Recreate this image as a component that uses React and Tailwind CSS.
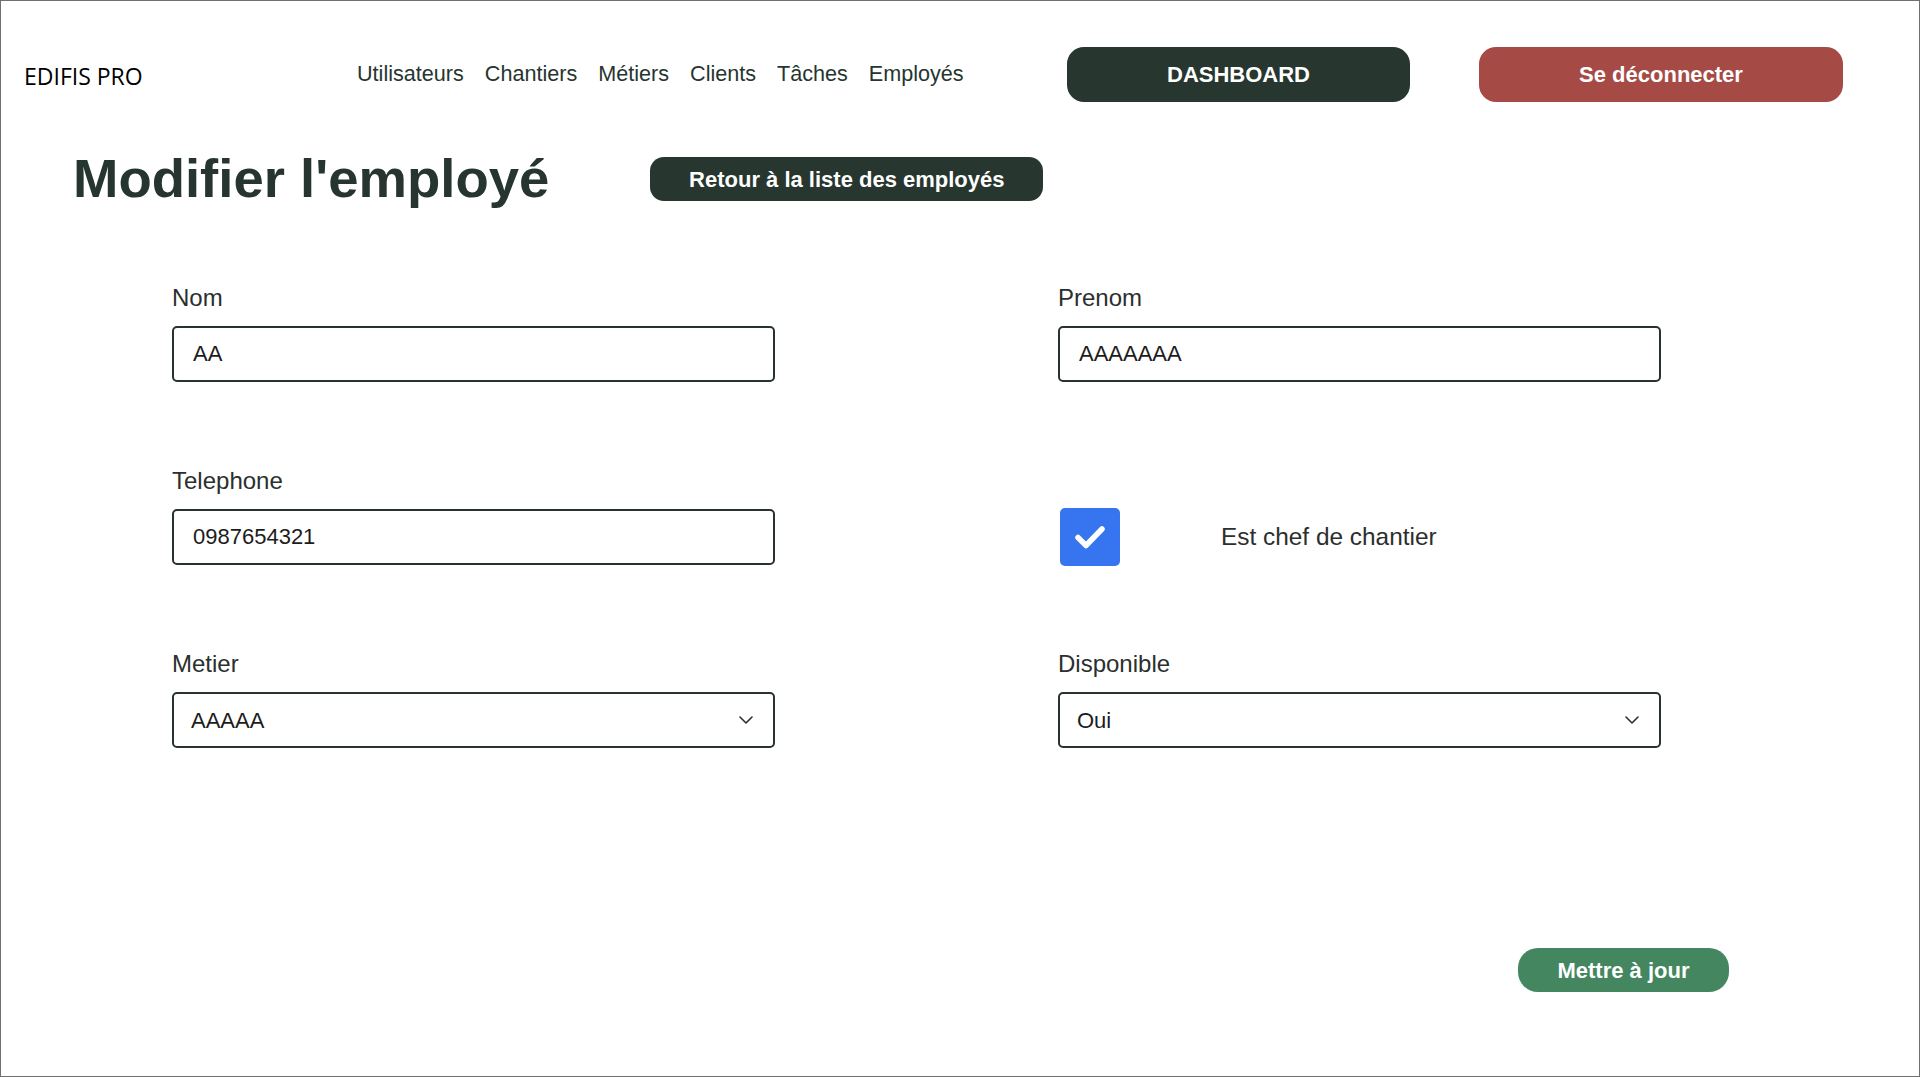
import { useState } from 'react'

const navLinks = ['Utilisateurs', 'Chantiers', 'Métiers', 'Clients', 'Tâches', 'Employés']

function Field({ label, children }) {
  return (
    <div className="flex flex-col">
      <label className="mb-[15px] text-[24px] leading-[26px] text-[#2b2f2d]">{label}</label>
      {children}
    </div>
  )
}

function TextInput({ value }) {
  return (
    <input
      defaultValue={value}
      className="h-[56px] w-full rounded-[5px] border-2 border-[#28332e] bg-white px-[19px] text-[22px] text-[#1c1c1c] outline-none"
    />
  )
}

function Select({ value, options }) {
  return (
    <div className="relative h-[56px] w-full">
      <select
        defaultValue={value}
        className="h-full w-full appearance-none rounded-[5px] border-2 border-[#28332e] bg-white pl-[17px] text-[22px] text-[#1c1c1c] outline-none"
      >
        {options.map((o) => (
          <option key={o}>{o}</option>
        ))}
      </select>
      {/* chevron sits over the select */}
      <svg
        className="pointer-events-none absolute right-[22px] top-1/2 -translate-y-1/2"
        width="14"
        height="8"
        viewBox="0 0 14 8"
        fill="none"
      >
        <path d="M1 1l6 6 6-6" stroke="#28332e" strokeWidth="1.6" strokeLinecap="round" strokeLinejoin="round" />
      </svg>
    </div>
  )
}

// "Modifier l'employé" — edit form for a single employee.
export default function App() {
  const [chef, setChef] = useState(true)

  return (
    <div className="h-[1077px] w-full overflow-hidden border border-[#707070] bg-white font-['Liberation_Sans',Arial,sans-serif] text-[#263530]">
      <header className="flex items-center pt-[46px]">
        <div className="w-[356px] pl-[23px] pt-[3px] font-['Open_Sans',sans-serif] text-[23px] text-black">EDIFIS PRO</div>
        <nav className="flex gap-[21px] pb-[2px] text-[21.6px] text-[#263530]">
          {navLinks.map((l) => (
            <a key={l} href="#" className="leading-none">
              {l}
            </a>
          ))}
        </nav>
        <button className="ml-auto h-[55px] w-[343px] rounded-[17px] bg-[#27362f] text-[22px] font-bold text-white">
          DASHBOARD
        </button>
        <button className="ml-[69px] mr-[76px] h-[55px] w-[364px] rounded-[17px] bg-[#a54a45] text-[22px] font-bold text-white">
          Se déconnecter
        </button>
      </header>

      <div className="mt-[50px] flex items-center pl-[72px]">
        <h1 className="text-[54.5px] font-bold leading-[54px] text-[#263530]">Modifier l'employé</h1>
        <button className="ml-[101px] h-[44px] w-[393px] rounded-[14px] bg-[#27362f] text-[22px] font-bold text-white">
          Retour à la liste des employés
        </button>
      </div>

      <form className="mt-[79px] grid grid-cols-[603px_603px] gap-x-[283px] gap-y-[86px] pl-[171px]">
        <Field label="Nom">
          <TextInput value="AA" />
        </Field>
        <Field label="Prenom">
          <TextInput value="AAAAAAA" />
        </Field>
        <Field label="Telephone">
          <TextInput value="0987654321" />
        </Field>
        <div className="mt-[41px] flex h-[56px] items-center">
          <button
            type="button"
            onClick={() => setChef(!chef)}
            className="ml-[2px] flex h-[58px] w-[60px] shrink-0 items-center justify-center rounded-[5px] bg-[#3674f0]"
          >
            {chef && (
              <svg width="32" height="26" viewBox="0 0 32 26" fill="none">
                <path d="M4 13.5l8 8L28 5" stroke="white" strokeWidth="5.5" strokeLinecap="round" strokeLinejoin="round" />
              </svg>
            )}
          </button>
          <span className="ml-[101px] text-[24.4px] text-[#2b2f2d]">Est chef de chantier</span>
        </div>
        <Field label="Metier">
          <Select value="AAAAA" options={['AAAAA']} />
        </Field>
        <Field label="Disponible">
          <Select value="Oui" options={['Oui', 'Non']} />
        </Field>
      </form>

      <div className="mt-[200px] flex justify-end pr-[190px]">
        <button className="h-[44px] w-[211px] rounded-[20px] bg-[#438660] text-[22px] font-bold text-white">
          Mettre à jour
        </button>
      </div>
    </div>
  )
}
